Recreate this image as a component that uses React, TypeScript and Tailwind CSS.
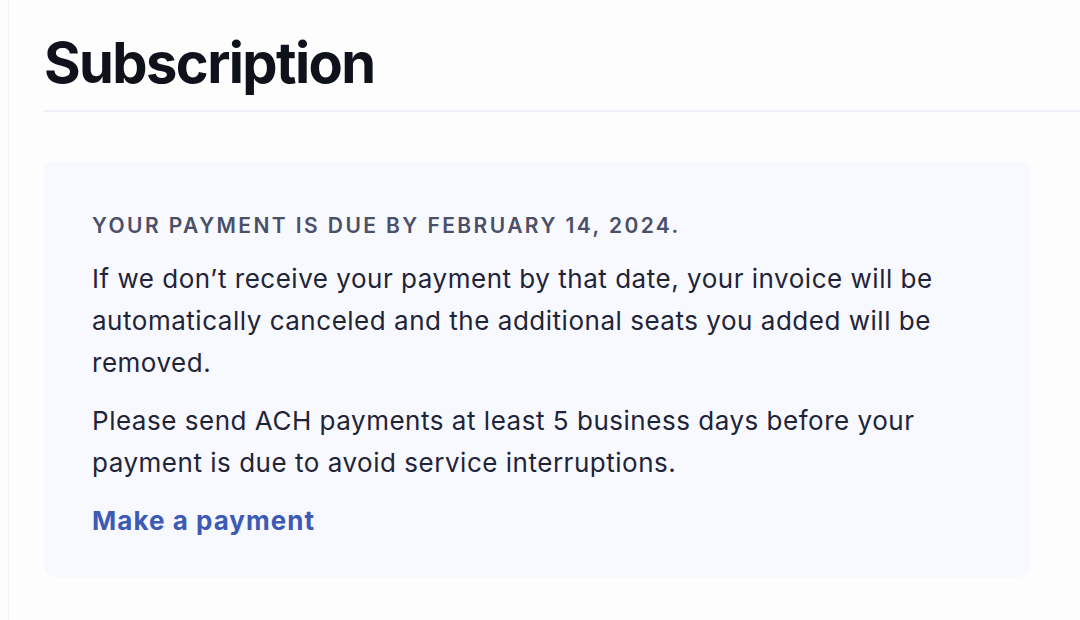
export default function App() {
  return (
    <div className="min-h-[620px] w-[1080px] bg-[#fdfdfe] font-['Inter',sans-serif]">
      <div className="ml-[8px] min-h-[620px] border-l border-[#f3f4f7] pl-[35px]">
        {/* Page header */}
        <h1 className="pt-[29px] pb-[13px] text-[56px] font-bold leading-[68px] tracking-[-1.6px] text-[#0f121b]">
          Subscription
        </h1>
        <div className="h-[2px] bg-[#eef0f6]" />

        {/* Payment notice */}
        <div className="mt-[49px] mr-[49px] rounded-[10px] bg-[#f8f9fe] px-[48px] pt-[49px] pb-[35px]">
          <p className="text-[21px] font-semibold uppercase leading-[32px] tracking-[0.115em] text-[#4a5068]">
            Your payment is due by February 14, 2024.
          </p>
          <p className="mt-[16px] text-[26px] leading-[42px] tracking-[0.02em] text-[#1f2438]">
            If we don’t receive your payment by that date, your invoice will be automatically canceled and the
            additional seats you added will be removed.
          </p>
          <p className="mt-[16px] text-[26px] leading-[42px] tracking-[0.02em] text-[#1f2438]">
            Please send ACH payments at least 5 business days before your payment is due to avoid service
            interruptions.
          </p>
          <a href="#" className="mt-[16px] block text-[26px] font-bold leading-[42px] tracking-[0.04em] text-[#3d5ab5]">
            Make a payment
          </a>
        </div>
      </div>
    </div>
  );
}
